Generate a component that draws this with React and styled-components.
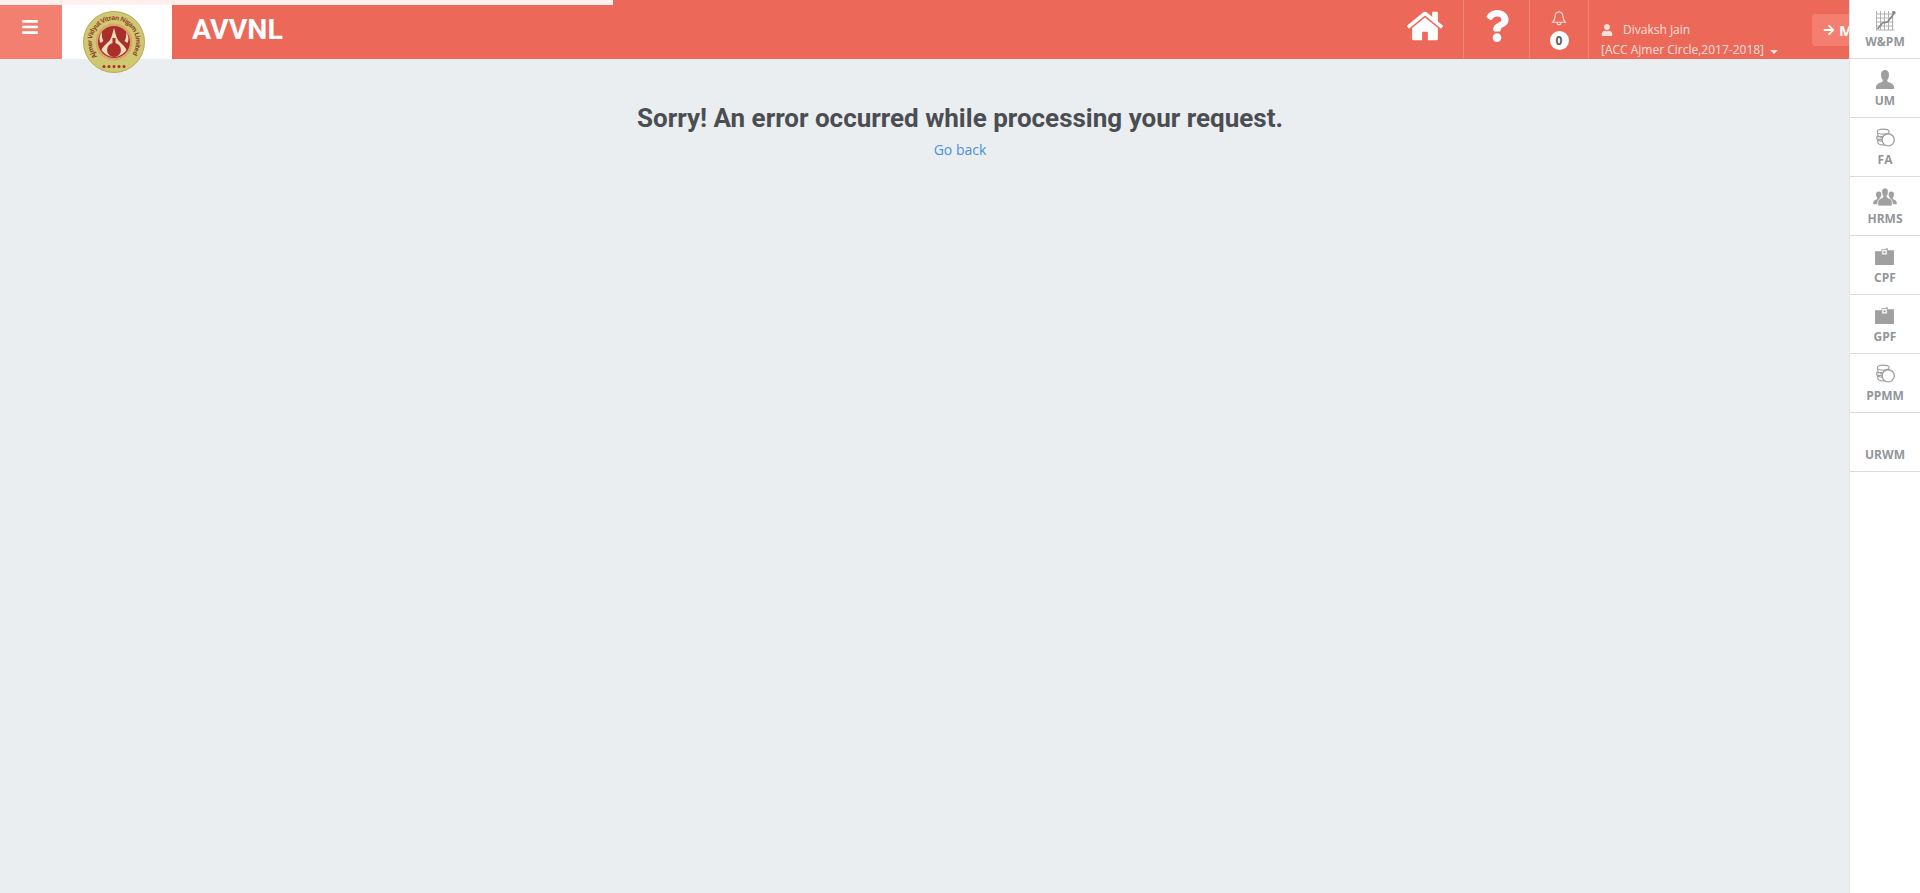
import React from "react";
import styled, { createGlobalStyle } from "styled-components";
import { FaQuestion, FaUser, FaArrowRight, FaBars } from "react-icons/fa";

const Global = createGlobalStyle`
  html, body {
    margin: 0;
    padding: 0;
    height: 100%;
    background: #ebeef1;
    font-family: "Open Sans", sans-serif;
  }
  #root { height: 100%; }
`;

const Page = styled.div`
  height: 893px;
  overflow: hidden;
  background: #ebeef1;
`;

const Progress = styled.div`
  position: fixed;
  top: 0;
  left: 0;
  width: 613px;
  height: 5px;
  background: #fff0ed;
  z-index: 5;
`;

const Header = styled.header`
  display: flex;
  align-items: stretch;
  height: 59px;
  background: #ec6859;
`;

const MenuToggle = styled.button`
  width: 62px;
  border: none;
  padding: 0 2px 5px 0;
  background: #f27f70;
  color: #fff;
  font-size: 18px;
  display: flex;
  align-items: center;
  justify-content: center;
`;

const LogoBox = styled.div`
  width: 110px;
  box-sizing: border-box;
  padding: 11px 0 0 21px;
  background: #fff;
`;

const Brand = styled.div`
  padding: 0 0 0 20px;
  color: #fff;
  font-family: Roboto, "Liberation Sans", sans-serif;
  font-weight: 700;
  font-size: 28.5px;
  display: flex;
  align-items: center;
`;

const Tools = styled.div`
  margin-left: auto;
  display: flex;
  align-items: stretch;
  padding-right: 70px;
`;

const Cell = styled.div`
  width: ${(p) => p.$w}px;
  box-sizing: border-box;
  border-right: 1px solid #f28375;
  color: #fff;
  display: flex;
  flex-direction: column;
  align-items: center;
  justify-content: ${(p) => p.$top ? "flex-start" : "center"};
  padding-top: ${(p) => p.$top ? 9 : 0}px;
  padding-bottom: ${(p) => p.$top ? 0 : 7}px;
`;

const Badge = styled.span`
  width: 19px;
  height: 19px;
  margin-top: 4px;
  border-radius: 50%;
  background: #fff;
  color: #5c5c5c;
  font-size: 12px;
  font-weight: 700;
  line-height: 19px;
  text-align: center;
`;

const UserCell = styled.div`
  width: 223px;
  box-sizing: border-box;
  padding: 20px 0 0 12px;
  color: #fde0db;
  line-height: 20px;
`;

const UserName = styled.div`
  display: flex;
  align-items: center;
  gap: 10px;
  font-size: 12px;
  svg { font-size: 12px; }
`;

const Circle = styled.div`
  display: flex;
  align-items: center;
  gap: 6px;
  font-size: 12px;
  white-space: nowrap;
`;

const Caret = styled.span`
  width: 0;
  height: 0;
  margin-top: 3px;
  border-left: 4px solid transparent;
  border-right: 4px solid transparent;
  border-top: 4px solid #fde0db;
`;

const SwitchButton = styled.div`
  width: 38px;
  height: 32px;
  margin-top: 14px;
  box-sizing: border-box;
  padding-left: 11px;
  border-radius: 3px 0 0 3px;
  background: #f27f70;
  color: #fff;
  font-size: 15px;
  font-weight: 700;
  display: flex;
  align-items: center;
  gap: 4px;
  overflow: hidden;
  white-space: nowrap;
  svg { font-size: 12px; flex: none; }
`;

const Main = styled.main`
  padding-top: 42px;
  text-align: center;
`;

const Title = styled.h1`
  margin: 0;
  font-family: Roboto, sans-serif;
  font-weight: 700;
  font-size: 26px;
  line-height: 34px;
  color: #4a4d52;
`;

const BackLink = styled.a`
  display: block;
  margin-top: 5px;
  font-size: 14px;
  line-height: 20px;
  color: #4a90d2;
  text-decoration: none;
`;

const Side = styled.nav`
  position: fixed;
  top: 0;
  right: 0;
  bottom: 0;
  width: 71px;
  box-sizing: border-box;
  background: #fff;
  border-left: 1px solid #e2e5e8;
  z-index: 6;
`;

const SideItem = styled.div`
  height: 59px;
  box-sizing: border-box;
  border-bottom: 1px solid #dcdcdc;
  display: flex;
  flex-direction: column;
  align-items: center;
  padding-top: 10px;
`;

const IconSlot = styled.div`
  width: 24px;
  height: 24px;
  color: #a0a0a0;
  svg { display: block; }
`;

const SideLabel = styled.span`
  font-size: 12px;
  line-height: 16px;
  font-weight: 700;
  color: #92969a;
`;

const Home = () => (
  <svg width="40" height="40" viewBox="0 0 1792 1792" fill="currentColor">
    <path d="M1472 992v480q0 26-19 45t-45 19h-384v-384h-256v384h-384q-26 0-45-19t-19-45v-480q0-1 .5-3t.5-3l575-474 575 474q1 2 1 6zm223-69l-62 74q-8 9-21 11h-3q-13 0-21-7l-692-577-692 577q-12 8-24 7-13-2-21-11l-62-74q-8-10-7-23.5t11-21.5l719-599q32-26 76-26t76 26l244 204v-195q0-14 9-23t23-9h192q14 0 23 9t9 23v408l219 182q10 8 11 21.5t-7 23.5z" />
  </svg>
);

const Bell = () => (
  <svg width="16" height="18" viewBox="0 0 16 17" fill="none" stroke="#fde0db" strokeWidth="1.1">
    <path d="M8 1.2v1.3M8 2.5c-2.6 0-3.9 2-3.9 4.3 0 3-1 4.4-2.6 6h13c-1.6-1.6-2.6-3-2.6-6 0-2.3-1.3-4.3-3.9-4.3zM6.200 12.900c0 1.200.8 2.300 1.800 2.300s1.800-1.100 1.800-2.300" />
  </svg>
);

const Seal = () => (
  <svg width="62" height="62" viewBox="0 0 62 62" style={{ display: "block", position: "relative" }}>
    <defs>
      <path id="sealArc" d="M14.300 45.300 A22 22 0 1 1 47.700 45.300" />
    </defs>
    <circle cx="31" cy="31" r="30.500" fill="#cfc873" stroke="#bba94f" />
    <text fontFamily="Open Sans, sans-serif" fontSize="6.500" fontWeight="700" fill="#93402c">
      <textPath href="#sealArc" textLength="97">Ajmer Vidyut Vitran Nigam Limited</textPath>
    </text>
    <circle cx="31" cy="31" r="18.500" fill="#dba469" />
    <circle cx="31" cy="31" r="16" fill="#a92f2a" />
    <path d="M31 17c-1.500 5-2 9-4 12-2.500 3-7 6-8.500 10 3 4 7.500 7 12.500 7s9.500-3 12.500-7c-1.500-4-6-7-8.500-10-2-3-2.500-7-4-12z" fill="#f1dcbc" />
    <path d="M19 21c-3 4-3 8-1.500 11l3-2c-1.500-2-2-5-1.500-9zM43 21c3 4 3 8 1.500 11l-3-2c1.500-2 2-5 1.500-9z" fill="#f1dcbc" />
    <circle cx="31" cy="39" r="7" fill="#a92f2a" />
    <path d="M29.500 27h3v7h-3z" fill="#a92f2a" />
    {[21, 26, 31, 36, 41].map((x) => (
      <circle key={x} cx={x} cy="55.500" r="1.500" fill="#a92f2a" />
    ))}
  </svg>
);

const ChartIcon = () => (
  <svg width="23" height="21" viewBox="0 0 22 21" style={{ marginLeft: 1 }}>
    <path d="M2 1v19h18M2 4h17M2 8h17M2 12h17M2 16h17M6 1v19M10 1v19M14 1v19M18 1v19" fill="none" stroke="#a8a8a8" strokeWidth=".9" />
    <path d="M3 19l5-6 5-1 7-9" fill="none" stroke="#858585" strokeWidth="1.600" />
    <circle cx="19.500" cy="2.500" r="1.600" fill="#858585" />
  </svg>
);

const PersonIcon = () => (
  <svg width="20" height="20" viewBox="0 0 20 20" fill="currentColor" style={{ marginLeft: 2, marginTop: 1 }}>
    <path d="M10 0c3 0 4 2.400 4 5 0 2.200-.9 4-1.700 5-.5.8 0 1.400 1 1.900 2.300 1 5.700 2 5.700 5.100v2H1v-2c0-3.100 3.400-4.100 5.700-5.100 1-.5 1.500-1.100 1-1.900C6.900 9 6 7.200 6 5c0-2.600 1-5 4-5z" />
  </svg>
);

const CoinsIcon = () => (
  <svg width="20" height="20" viewBox="0 0 22 21" style={{ marginLeft: 2 }}>
    <g fill="#fff" stroke="#a0a0a0" strokeWidth="1.300">
      <path d="M3 14.500c0 2.200 2.500 3.500 6 3.500h5v-6H3zM2 10.500c0 2 2.500 3.500 6 3.500h5V9H2zM3 6.500c0 2 2.500 3.500 6 3.500h5V5H3z" />
      <ellipse cx="9" cy="3.500" rx="6.500" ry="2.800" />
    </g>
    <circle cx="14.500" cy="12.500" r="6.700" fill="#fff" stroke="#a0a0a0" strokeWidth="1.500" />
  </svg>
);

const GroupIcon = () => (
  <svg width="26" height="18" viewBox="0 0 26 20" fill="currentColor" style={{ marginLeft: -1, marginTop: 1 }}>
    <path d="M6 4c2 0 3 1.500 3 3.200 0 1.400-.6 2.500-1.100 3.200L4 18H0v-2c0-2.200 2.400-2.800 3.800-3.500.6-.4.900-.8.500-1.500C3.700 10 3 8.800 3 7.200 3 5.500 4 4 6 4zM20 4c2 0 3 1.500 3 3.200 0 1.600-.7 2.800-1.300 3.800-.4.700-.1 1.100.5 1.500 1.400.7 3.800 1.300 3.800 3.500v2h-4l-3.900-7.600C17.600 9.700 17 8.600 17 7.200 17 5.500 18 4 20 4z" />
    <path d="M13 0c2.700 0 3.700 2.200 3.700 4.500 0 2-.8 3.500-1.500 4.500-.5.800 0 1.300.9 1.800 2 1 4.900 1.800 4.900 4.500V20H5v-4.700c0-2.700 2.900-3.500 4.900-4.500.9-.5 1.400-1 .9-1.800-.7-1-1.500-2.500-1.500-4.500C9.300 2.200 10.300 0 13 0z" stroke="#fff" strokeWidth=".8" />
  </svg>
);

const WalletIcon = () => (
  <svg width="21" height="19" viewBox="0 0 20 18" style={{ marginLeft: 1, marginTop: 1 }}>
    <path d="M1 4h6.500v-1l5.500-2v2H19v14H1z" fill="#a0a0a0" />
    <rect x="7.500" y="2.500" width="5" height="5" fill="#fff" stroke="#a0a0a0" strokeWidth=".7" />
    <rect x="9" y="4" width="2" height="2" fill="#a0a0a0" />
  </svg>
);

const modules = [
  { label: "W&PM", icon: <ChartIcon /> },
  { label: "UM", icon: <PersonIcon /> },
  { label: "FA", icon: <CoinsIcon /> },
  { label: "HRMS", icon: <GroupIcon /> },
  { label: "CPF", icon: <WalletIcon /> },
  { label: "GPF", icon: <WalletIcon /> },
  { label: "PPMM", icon: <CoinsIcon /> },
  { label: "URWM", icon: null },
];

export default function App() {
  return (
    <Page>
      <Global />
      <Progress />
      <Header>
        <MenuToggle aria-label="Menu">
          <FaBars />
        </MenuToggle>
        <LogoBox>
          <Seal />
        </LogoBox>
        <Brand>AVVNL</Brand>
        <Tools>
          <Cell $w={78}>
            <Home />
          </Cell>
          <Cell $w={66}>
            <FaQuestion size={32} />
          </Cell>
          <Cell $w={59} $top>
            <Bell />
            <Badge>0</Badge>
          </Cell>
          <UserCell>
            <UserName>
              <FaUser />
              Divaksh Jain
            </UserName>
            <Circle>
              [ACC Ajmer Circle,2017-2018]
              <Caret />
            </Circle>
          </UserCell>
          <SwitchButton>
            <FaArrowRight />M
          </SwitchButton>
        </Tools>
      </Header>
      <Main>
        <Title>Sorry! An error occurred while processing your request.</Title>
        <BackLink href="#">Go back</BackLink>
      </Main>
      <Side>
        {modules.map((m) => (
          <SideItem key={m.label}>
            <IconSlot>{m.icon}</IconSlot>
            <SideLabel>{m.label}</SideLabel>
          </SideItem>
        ))}
      </Side>
    </Page>
  );
}
